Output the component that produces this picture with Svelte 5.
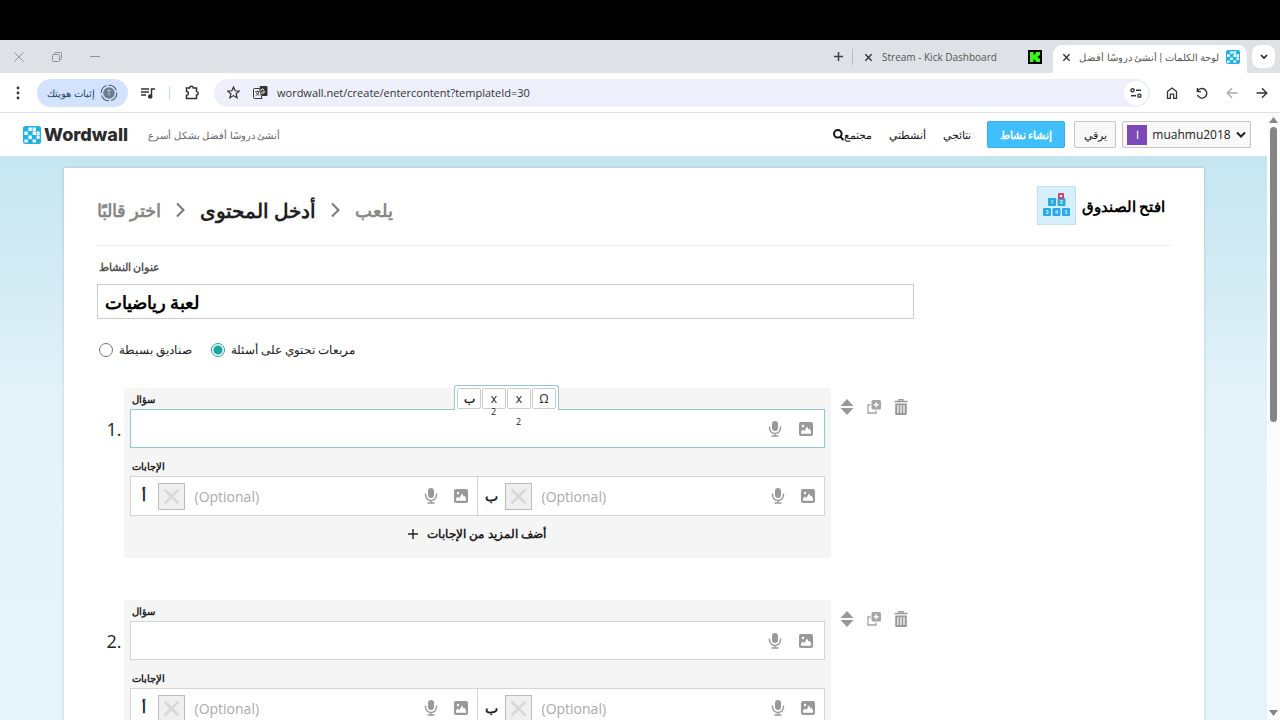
<script lang="ts">
	type Answer = { id: string; letter: string };

	const answers: Answer[] = [
		{ id: 'a', letter: 'أ' },
		{ id: 'b', letter: 'ب' }
	];
	const questions = [1, 2];

	let focused = $state(1);
	let mode = $state('questions');
	let title = $state('لعبة رياضيات');
	let url = $state('wordwall.net/create/entercontent?templateId=30');
</script>

{#snippet wordwallMark(size: number)}
	<svg width={size} height={size} viewBox="0 0 18 18" aria-hidden="true">
		<rect width="18" height="18" rx="2.5" fill="#1fb2e7" />
		<path
			fill="#fff"
			d="M5.4 1.5h3.4v3.4H5.4zM9.6 1.5H13v3.4H9.6zM1.4 5.6h3.4V9H1.4zM9.6 5.6H13V9H9.6zM13.6 5.6h3V9h-3zM5.4 9.6h3.4V13H5.4zM1.4 13.4h3.4v3H1.4zM9.6 13.4H13v3H9.6zM13.6 9.6h3V13h-3z"
		/>
	</svg>
{/snippet}

{#snippet cross(size: number)}
	<svg width={size} height={size} viewBox="0 0 10 10" fill="none" stroke="currentColor" stroke-width="1.5" aria-hidden="true">
		<path d="M1.5 1.5l7 7M8.5 1.5l-7 7" />
	</svg>
{/snippet}

{#snippet mediaButtons()}
	<button class="icon" type="button" aria-label="Record audio">
		<svg width="14" height="16" viewBox="0 0 14 16" aria-hidden="true">
			<rect x="4" y="0" width="6" height="10" rx="3" fill="#999" />
			<path d="M1.5 5.5V7a5.5 5.5 0 0 0 11 0V5.5M7 12.5V15M3.5 15h7" fill="none" stroke="#999" stroke-width="1.4" />
		</svg>
	</button>
	<button class="icon" type="button" aria-label="Add image">
		<svg width="14" height="14" viewBox="0 0 14 14" aria-hidden="true">
			<rect width="14" height="14" rx="2" fill="#999" />
			<circle cx="4" cy="4" r="1.2" fill="#fff" />
			<path d="M2 11.8V9.5l2-2 1.3 1.8 2.6-4.7 1.8 3 1-.8 1.3 2.7v2.3z" fill="#fff" />
		</svg>
	</button>
{/snippet}

<div class="screen">
	<div class="letterbox"></div>

	<div class="tabstrip">
		<div class="window-controls">
			<button aria-label="Close window">
				<svg width="10" height="10" viewBox="0 0 10 10" fill="none" stroke="#8f9296"><path d="M.5.5l9 9M9.5.5l-9 9" /></svg>
			</button>
			<button aria-label="Restore window">
				<svg width="10" height="10" viewBox="0 0 10 10" fill="none" stroke="#8f9296">
					<rect x=".5" y="2.5" width="7" height="7" rx="1" />
					<path d="M2.5 2.5V1.3a.8.8 0 0 1 .8-.8h5.4a.8.8 0 0 1 .8.8v5.4a.8.8 0 0 1-.8.8H7.5" />
				</svg>
			</button>
			<button aria-label="Minimise window">
				<svg width="10" height="10" viewBox="0 0 10 10" stroke="#8f9296"><path d="M0 4.5h10" /></svg>
			</button>
		</div>
		<div class="tabs">
			<button class="new-tab" aria-label="New tab">
				<svg width="9" height="9" viewBox="0 0 9 9" stroke="#3c4043" stroke-width="1.5"><path d="M0 4.5h9M4.5 0v9" /></svg>
			</button>
			<div class="tab">
				<button aria-label="Close tab">{@render cross(9)}</button>
				<span class="tab-name">Stream - Kick Dashboard</span>
				<svg width="14" height="14" viewBox="0 0 14 14" aria-hidden="true">
					<rect width="14" height="14" fill="#000" />
					<path fill="#3df51c" d="M2 2h3.6v2.6h1.2V3.3H8V2h4v3.5h-1.3v1H9.5v1h1.2v1H12V12H8v-1.3H6.8V9.4H5.6V12H2z" />
				</svg>
			</div>
			<div class="tab active">
				<button aria-label="Close tab">{@render cross(9)}</button>
				<span class="tab-name">لوحة الكلمات | أنشئ دروسًا أفضل</span>
				{@render wordwallMark(14)}
			</div>
			<button class="tab-search" aria-label="Search tabs">
				<svg width="8" height="6" viewBox="0 0 8 6" fill="none" stroke="#222" stroke-width="1.6"><path d="M1 1l3 3 3-3" /></svg>
			</button>
		</div>
	</div>

	<div class="toolbar">
		<button class="menu" aria-label="Menu">
			<svg width="4" height="14" viewBox="0 0 4 14" fill="#333">
				<circle cx="2" cy="2" r="1.4" /><circle cx="2" cy="7" r="1.4" /><circle cx="2" cy="12" r="1.4" />
			</svg>
		</button>
		<button class="profile">
			<span>إثبات هويتك</span>
			<svg width="18" height="18" viewBox="0 0 18 18" aria-hidden="true">
				<circle cx="9" cy="9" r="7.8" fill="none" stroke="#49617d" stroke-width="1.1" stroke-dasharray="10 2" />
				<circle cx="9" cy="9" r="5.8" fill="#687f8f" />
				<path d="M7.2 6.5h3.6M9 6.5v5" stroke="#b9c8d3" />
			</svg>
		</button>
		<button class="media" aria-label="Media">
			<svg width="14" height="12" viewBox="0 0 14 12" fill="none" stroke="#333" stroke-width="1.5">
				<path d="M0 2h8M0 5h8M0 8h5M10.5 9.5V2H14" />
				<circle cx="9.2" cy="9.5" r="1.5" fill="#333" />
			</svg>
		</button>
		<span class="divider"></span>
		<button class="extensions" aria-label="Extensions">
			<svg width="15" height="15" viewBox="0 0 15 15" fill="none" stroke="#333" stroke-width="1.5">
				<path d="M1.5 3h3.2a1.8 1.8 0 0 1 3.6 0h3.2v3.6a1.7 1.7 0 0 1 0 3.5v3.4h-10v-3.2a1.8 1.8 0 0 0 0-3.8z" />
			</svg>
		</button>
		<div class="address">
			<button class="star" aria-label="Bookmark">
				<svg width="13" height="13" viewBox="0 0 13 13" fill="none" stroke="#333" stroke-width="1.2">
					<path d="M6.5 1l1.6 3.8 4.1.3-3.1 2.7 1 4-3.6-2.2-3.6 2.2 1-4L.8 5.1l4.1-.3z" />
				</svg>
			</button>
			<button class="translate" aria-label="Translate">
				<svg width="15" height="15" viewBox="0 0 15 15">
					<path d="M6.5 1h7a1 1 0 0 1 1 1v8a1 1 0 0 1-1 1H9z" fill="#333" />
					<path d="M11.5 6.2H9.7M11.6 6.4a2 2 0 1 1-.6-1.7" fill="none" stroke="#fff" stroke-width=".9" />
					<path d="M6.5 3.5h-5a1 1 0 0 0-1 1v8a1 1 0 0 0 1 1h7.5z" fill="#f2f4fb" stroke="#333" />
					<path d="M2.2 6.6h4.4M4.4 5.6v1M5.8 6.6c-.4 2-1.8 3.4-3.3 4.2M3.2 7.6c.6 1.4 1.8 2.4 3.2 3" fill="none" stroke="#333" stroke-width=".9" />
				</svg>
			</button>
			<input aria-label="Address" bind:value={url} spellcheck="false" />
			<button class="tune" aria-label="Site settings">
				<svg width="12" height="10" viewBox="0 0 12 10" fill="none" stroke="#333" stroke-width="1.4">
					<circle cx="2.6" cy="2.3" r="1.6" /><path d="M6 2.3h5M1 7.7h5" /><circle cx="9.4" cy="7.7" r="1.6" />
				</svg>
			</button>
		</div>
		<div class="nav-buttons">
			<button aria-label="Home">
				<svg width="12" height="12" viewBox="0 0 12 12" fill="none" stroke="#333" stroke-width="1.3">
					<path d="M1.5 4.6L6 1l4.5 3.6v6.7H7.6V7.2H4.4v4.1H1.5z" />
				</svg>
			</button>
			<button aria-label="Reload">
				<svg width="12" height="12" viewBox="0 0 12 12" fill="none" stroke="#333" stroke-width="1.4">
					<path d="M1.4 1v3.6H5M1.6 4.4A4.8 4.8 0 1 1 1.5 8" />
				</svg>
			</button>
			<button aria-label="Forward">
				<svg width="12" height="12" viewBox="0 0 12 12" fill="none" stroke="#aaa" stroke-width="1.3"><path d="M11.5 6H1.5M6 1.2L1.2 6 6 10.8" /></svg>
			</button>
			<button aria-label="Back">
				<svg width="12" height="12" viewBox="0 0 12 12" fill="none" stroke="#333" stroke-width="1.4"><path d="M.5 6h10M6 1.2L10.8 6 6 10.8" /></svg>
			</button>
		</div>
	</div>

	<div class="viewport">
		<div class="page">
			<header>
				<a class="logo" href="#home">{@render wordwallMark(18)}<span>Wordwall</span></a>
				<span class="tagline">أنشئ دروسًا أفضل بشكل أسرع</span>
				<nav>
					<a class="search" href="#community">
						<svg width="11" height="12" viewBox="0 0 11 12" fill="none" stroke="#111" stroke-width="2">
							<circle cx="4.8" cy="4.8" r="3.8" /><path d="M7.4 7.6l3 3.4" />
						</svg>
						<span>مجتمع</span>
					</a>
					<a href="#activities">أنشطتي</a>
					<a href="#results">نتائجي</a>
				</nav>
				<button class="create">إنشاء نشاط</button>
				<button class="upgrade">يرقي</button>
				<button class="account">
					<span class="avatar">ا</span>
					<span>muahmu2018</span>
					<svg width="10" height="8" viewBox="0 0 10 8" fill="none" stroke="#222" stroke-width="2"><path d="M1 1.5l4 4 4-4" /></svg>
				</button>
			</header>

			<main>
				<div class="sheet">
					<div class="sheet-head">
						<div class="steps">
							<a href="#template">اختر قالبًا</a>
							<svg width="9" height="16" viewBox="0 0 9 16" fill="none" stroke="#777" stroke-width="2"><path d="M1 1.5L7.5 8 1 14.5" /></svg>
							<strong>أدخل المحتوى</strong>
							<svg width="9" height="16" viewBox="0 0 9 16" fill="none" stroke="#777" stroke-width="2"><path d="M1 1.5L7.5 8 1 14.5" /></svg>
							<span>يلعب</span>
						</div>
						<div class="template">
							<svg width="39" height="39" viewBox="0 0 39 39" aria-hidden="true">
								<rect x=".5" y=".5" width="38" height="38" fill="#d5effb" stroke="#c5dfeb" />
								<g fill="#27a9e6">
									<rect x="11" y="12" width="8" height="8" rx="1" />
									<rect x="20.5" y="12" width="8" height="8" rx="1" />
									<rect x="6" y="22" width="8" height="8" rx="1" />
									<rect x="15.5" y="22" width="8" height="8" rx="1" />
									<rect x="25" y="22" width="8" height="8" rx="1" />
								</g>
								<rect x="21" y="7" width="6" height="6" rx="1" fill="#dc3d68" />
								<circle cx="24" cy="10" r="1.3" fill="#fff" />
								<path
									d="M14.3 14.5l1-.5v4M23 14.5h2.5v1.5H23.5v1.5h2.2M9 24.5h2v3.2H9M9.5 26h1.5M20.3 28v-4l-2 2.7h2.8M30.3 24.3h-2v1.5h1.7v1.9h-2"
									fill="none"
									stroke="#d5effb"
									stroke-width=".8"
								/>
							</svg>
							<strong>افتح الصندوق</strong>
						</div>
					</div>

					<form>
						<label class="title-label" for="title">عنوان النشاط</label>
						<input class="title" id="title" bind:value={title} />

						<div class="modes">
							<label><input type="radio" name="mode" value="simple" bind:group={mode} />صناديق بسيطة</label>
							<label><input type="radio" name="mode" value="questions" bind:group={mode} />مربعات تحتوي على أسئلة</label>
						</div>

						{#each questions as n}
							<div class="question">
								<span class="number">{n}.</span>
								<div class="box">
									<label class="small" for="q{n}">سؤال</label>
									<div class="field" class:focused={focused === n}>
										<input id="q{n}" onfocus={() => (focused = n)} />
										{@render mediaButtons()}
										{#if focused === n}
											<div class="format">
												<button type="button"><b>ب</b></button>
												<button type="button">x<span class="sub">2</span></button>
												<button type="button">x<span class="sub low">2</span></button>
												<button type="button">Ω</button>
											</div>
										{/if}
									</div>
									<span class="small">الإجابات</span>
									<div class="answers">
										{#each answers as answer}
											<div class="answer">
												<label for="q{n}{answer.id}">{answer.letter}</label>
												<button class="mark" type="button" aria-label="Mark correct">
													<svg width="17" height="17" viewBox="0 0 17 17" stroke="#d8d8d8" stroke-width="2.6"><path d="M1.5 1.5l14 14M15.5 1.5l-14 14" /></svg>
												</button>
												<input id="q{n}{answer.id}" placeholder="(Optional)" />
												{@render mediaButtons()}
											</div>
										{/each}
									</div>
									<button class="more" type="button">
										<svg width="10" height="10" viewBox="0 0 10 10" stroke="#222" stroke-width="1.4"><path d="M0 5h10M5 0v10" /></svg>
										<span>أضف المزيد من الإجابات</span>
									</button>
								</div>
								<div class="row-tools">
									<button type="button" aria-label="Move">
										<svg width="14" height="16" viewBox="0 0 14 16" fill="#999"><path d="M7 0l6.5 7H.5zM7 16l6.5-7H.5z" /></svg>
									</button>
									<button type="button" aria-label="Duplicate">
										<svg width="14" height="14" viewBox="0 0 14 14">
											<path d="M3.5 5H1v8h8v-2.5" fill="none" stroke="#a5a5a5" stroke-width="1.3" />
											<rect x="4.5" y="0" width="9.5" height="9.5" rx="1.5" fill="#a5a5a5" />
											<path d="M9.2 2.2v5M6.7 4.7h5" stroke="#fff" stroke-width="1.5" />
										</svg>
									</button>
									<button type="button" aria-label="Delete">
										<svg width="14" height="16" viewBox="0 0 14 16">
											<path d="M.5 2.5h13M5 2V.7h4V2" fill="none" stroke="#999" stroke-width="1.3" />
											<path d="M1.2 4.5h11.6V15a1 1 0 0 1-1 1H2.2a1 1 0 0 1-1-1z" fill="#999" />
											<path d="M4 6v8M7 6v8M10 6v8" stroke="#fff" stroke-width="1.2" />
										</svg>
									</button>
								</div>
							</div>
						{/each}
					</form>
				</div>
			</main>
		</div>

		<div class="scrollbar" aria-hidden="true">
			<svg width="9" height="6" viewBox="0 0 9 6" fill="#858585"><path d="M4.5 0L9 6H0z" /></svg>
			<div class="track"><div class="thumb"></div></div>
			<svg width="9" height="6" viewBox="0 0 9 6" fill="#858585"><path d="M4.5 6L9 0H0z" /></svg>
		</div>
	</div>
</div>

<style>
	:global(body) {
		background: #fff;
	}

	.screen {
		display: flex;
		flex-direction: column;
		height: 100vh;
		overflow: hidden;
		font-family: 'Open Sans', sans-serif;
		font-size: 12px;
		color: #222;
	}

	.screen * {
		box-sizing: border-box;
	}

	svg {
		display: block;
		flex: none;
	}

	button,
	input {
		margin: 0;
		padding: 0;
		border: 0;
		background: none;
		font: inherit;
		color: inherit;
	}

	button {
		display: flex;
		align-items: center;
		justify-content: center;
		flex: none;
		white-space: nowrap;
	}

	input {
		min-width: 0;
		outline: 0;
	}

	a {
		color: inherit;
		text-decoration: none;
	}

	.letterbox {
		flex: none;
		height: 40px;
		background: #000;
	}

	/* Browser window */
	.tabstrip {
		display: flex;
		flex: none;
		justify-content: space-between;
		height: 33px;
		background: #dee1e5;
	}

	.window-controls {
		display: flex;
		gap: 28px;
		padding-left: 14px;
	}

	.tabs {
		display: flex;
		align-items: center;
		padding-right: 5px;
		font-size: 10px;
	}

	.new-tab {
		height: 16px;
		padding-right: 9px;
		border-right: 1px solid #b7bbc0;
	}

	.tab {
		display: flex;
		align-items: center;
		gap: 9px;
		width: 200px;
		height: 28px;
		padding: 0 11px 4px;
		margin-top: 5px;
		color: #555;
	}

	.tab-name {
		flex: 1;
		overflow: hidden;
		white-space: nowrap;
	}

	.tab.active {
		gap: 7px;
		width: 194px;
		padding: 0 7px 4px 9px;
		border-radius: 9px 9px 0 0;
		background: #fff;
		font-family: Roboto, sans-serif;
	}

	.tab.active .tab-name {
		text-align: right;
	}

	.tab button {
		color: #333;
	}

	.tab-search {
		width: 23px;
		height: 23px;
		margin-left: 5px;
		border-radius: 8px;
		background: #fff;
	}

	.toolbar {
		display: flex;
		flex: none;
		align-items: center;
		height: 40px;
		padding: 0 12px 0 16px;
		border-bottom: 1px solid #dfe1e5;
		background: #fff;
	}

	.profile {
		gap: 5px;
		width: 91px;
		height: 28px;
		margin-left: 17px;
		border-radius: 14px;
		background: #d3e2fd;
		color: #24456f;
		font-size: 10px;
	}

	.media {
		margin-left: 13px;
	}

	.divider {
		width: 1px;
		height: 14px;
		margin: 0 15px 0 14px;
		background: #c9d9ef;
	}

	.address {
		display: flex;
		flex: 1;
		align-items: center;
		height: 28px;
		margin-left: 14px;
		padding: 0 2px 0 13px;
		border-radius: 14px;
		background: #edf0fa;
	}

	.address input {
		flex: 1;
		margin-left: 9px;
		color: #333;
		font-size: 11px;
	}

	.translate {
		margin-left: 13px;
	}

	.tune {
		width: 24px;
		height: 24px;
		border-radius: 12px;
		background: #fff;
	}

	.nav-buttons {
		display: flex;
		gap: 18px;
		margin-left: 16px;
	}

	.viewport {
		display: flex;
		flex: 1;
		min-height: 0;
	}

	.page {
		flex: 1;
		min-width: 0;
		overflow: hidden;
	}

	.scrollbar {
		display: flex;
		flex-direction: column;
		align-items: center;
		gap: 4px;
		width: 13px;
		padding: 4px 0;
		background: #fcfcfc;
	}

	.track {
		flex: 1;
	}

	.thumb {
		width: 7px;
		height: 51%;
		border-radius: 4px;
		background: #858585;
	}

	/* Site header */
	header {
		display: flex;
		align-items: center;
		height: 43px;
		padding: 0 16px 0 23px;
		background: #fff;
	}

	.logo {
		display: flex;
		align-items: center;
		gap: 3px;
		font-family: Inter, sans-serif;
		font-size: 18px;
		font-weight: 800;
		color: #2b2b2b;
	}

	.tagline {
		margin-left: 20px;
		color: #666;
		font-size: 10px;
	}

	nav {
		display: flex;
		align-items: center;
		gap: 17px;
		margin-left: auto;
		color: #111;
		font-size: 11px;
	}

	.search {
		display: flex;
		align-items: center;
	}

	.create,
	.upgrade,
	.account {
		height: 27px;
		border: 1px solid #c4c4c4;
		border-radius: 2px;
		background: #f8f8f8;
		font-size: 12px;
	}

	.create {
		width: 78px;
		margin-left: 16px;
		border-color: #39afe8;
		background: #40bfff;
		color: #fff;
		font-size: 11px;
		font-weight: 700;
	}

	.upgrade {
		width: 42px;
		margin-left: 9px;
		font-size: 11px;
	}

	.account {
		gap: 5px;
		width: 129px;
		margin-left: 6px;
	}

	.avatar {
		width: 20px;
		height: 20px;
		background: #7b49b8;
		color: #fff;
		font-size: 11px;
		line-height: 20px;
	}

	main {
		padding: 12px 0;
		background: linear-gradient(#c5e6f0, #d3ebf4 120px, #e3f2f9 240px, #e6f3fa);
	}

	.sheet {
		max-width: 1140px;
		margin: 0 auto;
		padding: 0 33px 40px;
		background: #fff;
		box-shadow: 0 0 3px rgb(0 60 80 / 0.2);
	}

	.sheet-head {
		display: flex;
		justify-content: space-between;
		height: 78px;
		padding: 18px 5px 0 0;
		border-bottom: 1px solid #f0f0f0;
	}

	.steps {
		display: flex;
		align-items: center;
		gap: 15px;
		height: 48px;
		color: #888;
		font-size: 18px;
		font-weight: 700;
	}

	.steps strong {
		color: #222;
		font-size: 20px;
	}

	.template {
		display: flex;
		align-items: center;
		gap: 6px;
		height: 39px;
		color: #000;
		font-size: 15px;
	}

	form {
		max-width: 817px;
	}

	.title-label {
		display: block;
		padding: 12px 2px 8px;
		color: #555;
		font-size: 11px;
		font-weight: 700;
		line-height: 18px;
	}

	.title {
		width: 100%;
		height: 35px;
		padding: 0 7px;
		border: 1px solid #ccc;
		color: #000;
		font-size: 18px;
		font-weight: 700;
	}

	.modes {
		display: flex;
		gap: 19px;
		padding: 20px 2px 28px;
		line-height: 21px;
	}

	.modes label {
		display: flex;
		align-items: center;
		gap: 6px;
	}

	.modes input {
		width: 14px;
		height: 14px;
		border: 1px solid #777;
		border-radius: 50%;
		appearance: none;
	}

	.modes input:checked {
		border-color: #1aa79f;
		background: radial-gradient(#1aa79f 4px, #fff 5px);
	}

	.question {
		display: flex;
		margin-bottom: 42px;
	}

	.number {
		width: 27px;
		padding: 28px 2px 0 0;
		font-size: 18px;
		line-height: 26px;
		text-align: right;
	}

	.box {
		flex: 1;
		height: 170px;
		padding: 2px 6px 0;
		border-radius: 3px;
		background: #f5f5f5;
	}

	.small {
		display: block;
		padding-left: 2px;
		font-size: 10px;
		font-weight: 700;
		line-height: 19px;
	}

	.field {
		position: relative;
		display: flex;
		align-items: center;
		gap: 15px;
		height: 39px;
		margin-bottom: 9px;
		padding-right: 10px;
		border: 1px solid #d5d5d5;
		background: #fff;
	}

	.field.focused {
		border-color: #8cc8d6;
	}

	.field input,
	.answer input {
		flex: 1;
		height: 100%;
		font-size: 14px;
	}

	.icon {
		width: 16px;
		height: 20px;
	}

	/* Sits over the top edge of the focused field */
	.format {
		position: absolute;
		top: -25px;
		left: 50%;
		display: flex;
		gap: 1px;
		height: 25px;
		padding: 2px 2px 0;
		border: 1px solid #8cc8d6;
		border-bottom: 0;
		border-radius: 3px 3px 0 0;
		background: #fff;
		transform: translateX(-23px);
	}

	.format button {
		position: relative;
		width: 24px;
		height: 21px;
		border: 1px solid #ccc;
		border-radius: 2px;
	}

	.sub {
		position: absolute;
		top: 18px;
		left: 8px;
		font-size: 9px;
		line-height: 10px;
	}

	.sub.low {
		top: 28px;
	}

	.answers {
		display: flex;
		height: 40px;
		border: 1px solid #d5d5d5;
		background: #fff;
	}

	.answer {
		display: flex;
		flex: 1;
		align-items: center;
		gap: 14px;
		min-width: 0;
		padding-right: 8px;
	}

	.answer + .answer {
		border-left: 1px solid #d5d5d5;
	}

	.answer label {
		width: 27px;
		margin-right: -14px;
		font-size: 14px;
		font-weight: 700;
		line-height: 20px;
		text-align: center;
	}

	.answer input {
		margin-left: -4px;
	}

	.answer input::placeholder {
		color: #aaa;
		opacity: 1;
	}

	.mark {
		width: 27px;
		height: 27px;
		border: 1px solid #bbb;
		background: #efefef;
	}

	.more {
		gap: 9px;
		margin: 8px auto 0;
		font-size: 12px;
		font-weight: 700;
		line-height: 20px;
	}

	.row-tools {
		display: flex;
		gap: 13px;
		width: 83px;
		height: 38px;
		padding-left: 9px;
	}
</style>
